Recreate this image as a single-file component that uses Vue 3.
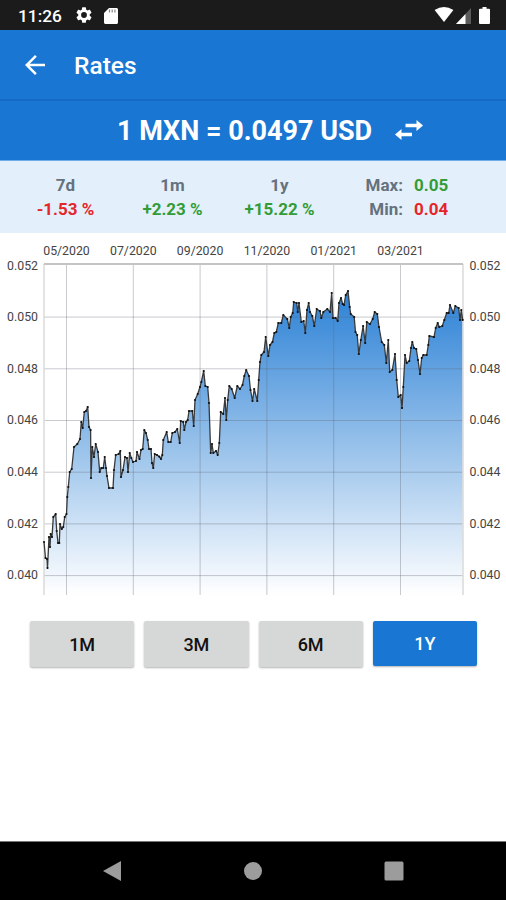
<template>
  <div class="screen">
    <header class="status-bar">
      <span class="clock">11:26</span>
      <svg class="gear" viewBox="2 2 20 20">
        <path
          fill="#fff"
          d="M19.14 12.94c.04-.3.06-.61.06-.94 0-.32-.02-.64-.07-.94l2.03-1.58a.49.49 0 0 0 .12-.61l-1.92-3.32a.49.49 0 0 0-.59-.22l-2.39.96a7 7 0 0 0-1.62-.94l-.36-2.54a.48.48 0 0 0-.48-.41h-3.84a.47.47 0 0 0-.47.41l-.36 2.54c-.59.24-1.13.57-1.62.94l-2.39-.96a.48.48 0 0 0-.59.22L2.74 8.87a.48.48 0 0 0 .12.61l2.03 1.58c-.05.3-.09.63-.09.94s.02.64.07.94l-2.03 1.58a.49.49 0 0 0-.12.61l1.92 3.32c.12.22.37.29.59.22l2.39-.96c.5.38 1.03.7 1.62.94l.36 2.54c.05.24.24.41.48.41h3.84c.24 0 .44-.17.47-.41l.36-2.54a6.8 6.8 0 0 0 1.62-.94l2.39.96c.22.08.47 0 .59-.22l1.92-3.32a.47.47 0 0 0-.12-.61zM12 15.6a3.6 3.6 0 1 1 0-7.2 3.6 3.6 0 0 1 0 7.2z"
        />
      </svg>
      <svg class="sd" viewBox="0 0 14 16">
        <path fill="#fff" d="M5 0h7.400A1.500 1.500 0 0 1 14 1.500v13a1.500 1.500 0 0 1-1.600 1.500H1.600A1.500 1.500 0 0 1 0 14.500V5z" />
        <path stroke="#888" stroke-width="1.2" d="M5.500 1.500v3M8.200 1.500v3M10.900 1.500v3" />
      </svg>
      <span class="spacer"></span>
      <svg class="wifi" viewBox="0 0 20 16">
        <path fill="#fff" d="M0 3.300Q10-3.300 20 3.300L10 16z" />
      </svg>
      <svg class="signal" viewBox="0 0 15 16">
        <path fill="#5b5b5b" d="M15 0v16H0z" />
        <path fill="#fff" d="M9.500 6v10H0z" />
      </svg>
      <svg class="battery" viewBox="0 0 11 17">
        <path fill="#fff" d="M3.500 0h4v1.700H10a1 1 0 0 1 1 1V16a1 1 0 0 1-1 1H1a1 1 0 0 1-1-1V2.700a1 1 0 0 1 1-1h2.500z" />
      </svg>
    </header>

    <nav class="toolbar">
      <svg class="back" viewBox="4 4 16 16">
        <path fill="#fff" d="M20 11H7.830l5.590-5.590L12 4l-8 8 8 8 1.410-1.410L7.830 13H20z" />
      </svg>
      <h1>Rates</h1>
    </nav>

    <section class="pair">
      <span class="rate">1 MXN = 0.0497 USD</span>
      <svg class="swap" viewBox="0 0 28 21">
        <path fill="#fff" d="M21.500 0 28 5.500 21.500 11V7.200H10.500V3.800h11zM6.500 9v3.800h10.500v3.400H6.500V20L0 14.500z" />
      </svg>
    </section>

    <section class="stats">
      <div v-for="item in changes" :key="item.label" class="change">
        <span>{{ item.label }}</span>
        <span :class="item.value.startsWith('-') ? 'down' : 'up'">{{ item.value }}</span>
      </div>
      <div class="range">
        <span>Max:</span>
        <span class="up">0.05</span>
        <span>Min:</span>
        <span class="down">0.04</span>
      </div>
    </section>

    <svg class="chart" viewBox="0 233 506 372">
      <defs>
        <linearGradient id="area" gradientUnits="userSpaceOnUse" x1="0" y1="264" x2="0" y2="595">
          <stop offset="0" stop-color="#1976d2" />
          <stop offset="1" stop-color="#ffffff" />
        </linearGradient>
      </defs>
      <path :d="areaPath" fill="url(#area)" />
      <g class="grid">
        <line v-for="m in months" :key="m.label" :x1="m.x" :x2="m.x" y1="264" y2="595" />
        <line v-for="t in ticks" :key="t.label" x1="44" x2="463" :y1="t.y" :y2="t.y" />
      </g>
      <path class="frame" d="M44 595V264M463 264V595" />
      <path class="frame top" d="M44 264H463" />
      <path :d="linePath" class="line" />
      <circle v-for="(p, i) in points" :key="i" :cx="p[0]" :cy="p[1]" r="1.1" fill="#111" />
      <g class="labels">
        <text v-for="m in months" :key="m.label" :x="m.x" y="255" text-anchor="middle">{{ m.label }}</text>
        <template v-for="t in ticks" :key="t.label">
          <text x="38" :y="t.text" text-anchor="end">{{ t.label }}</text>
          <text x="469.5" :y="t.text">{{ t.label }}</text>
        </template>
      </g>
    </svg>

    <div class="periods">
      <button
        v-for="p in periods"
        :key="p"
        :class="{ active: p === selected }"
        @click="selected = p"
      >
        {{ p }}
      </button>
    </div>

    <footer class="nav-bar">
      <svg viewBox="0 0 20 22"><path fill="#9c9c9c" d="M19 1v20L1 11z" /></svg>
      <svg viewBox="0 0 20 22"><circle cx="10" cy="11" r="9" fill="#9c9c9c" /></svg>
      <svg viewBox="0 0 20 22"><rect x="0.500" y="1.500" width="19" height="19" rx="1.500" fill="#9c9c9c" /></svg>
    </footer>
  </div>
</template>

<script setup>
import { ref, computed } from 'vue'

const changes = [
  { label: '7d', value: '-1.53 %' },
  { label: '1m', value: '+2.23 %' },
  { label: '1y', value: '+15.22 %' },
]

const periods = ['1M', '3M', '6M', '1Y']
const selected = ref('1Y')

const months = ['05/2020', '07/2020', '09/2020', '11/2020', '01/2021', '03/2021'].map(
  (label, i) => ({ label, x: 66.5 + i * 66.8 }),
)

const ticks = ['0.052', '0.050', '0.048', '0.046', '0.044', '0.042', '0.040'].map((label, i) => ({
  label,
  y: i === 0 ? 264 : 265.4 + i * 51.7,
  text: 269.5 + i * 51.6,
}))

const series = `
44,542 45.5,558 47,559 47.5,568 49,537 50,547 50.7,534 52,537 53.3,517 55.7,514 56.7,531
58,543 59.3,543 60,524 61.7,529 63.3,527 64.7,517 66.5,514 67.3,497 68.3,487 69.7,472 71.7,469
74,447 77.3,444 80,439 81.3,422 82.7,428 84.3,412 86,411 87.7,407 89,427 90.6,430 91,478
92.3,447 94,457 95.7,444 98,452 99.7,472 101.3,468 103.3,468 104.7,457 106,468 107,476
109,488 113,488 114,470 115.7,455 118.7,454 120.3,451 121,477 123,470 125,457 127,458
128,472 129.7,453 131.3,458 133,462 136,461 137,452 139.5,459 141,450 142.7,449 144.3,430
146,433 147.7,440 149,449 151,449 152,463 153.3,468 154.7,454 157,455 159.3,456.7 161,459
162.3,455 163.3,440 166.7,432 168.3,442 170.7,442 172.3,433 175,432 177.3,429 179.7,443
180.7,421 183.3,422 184.3,430 186,422 187.7,420 189,411 192.3,411 193.7,426 195,400 197.7,394
200,387 201.3,382 203.7,371 205.3,386 207.7,387 209,403 210.7,453 212,444 213.3,453 216,451
217.7,455 219.3,443 220.7,412 223.3,414 225,398 226.3,420 227.7,400 229.3,386 231.7,389
234.7,398 237.3,386 240,389 242.5,385 244.3,376 246.2,370 249,376 250.5,390 252.5,401 254.2,389
257.3,401 258.7,380 260,362 261.3,355 264,352 265.7,337 268.3,356 270,345 272.5,342 274.3,333
276.3,332 278.3,323 281.3,323 283.3,315 287.3,319 289.3,328 290.7,317 292.7,313 293.7,302
296.7,303 297.7,312 299,303 301.3,322 303.7,321 305.3,333 307,310 308.7,303 310,312 312.3,316
314.3,326 316.7,309 320,311 321.3,318 323.3,312 327.3,309 330,312 331.7,293 333,318 335.7,318
337.7,321 339,303 341,298 342.7,304 344,305 345.7,295 348,291 349.7,307 350.7,314 354.2,317
355.5,332 357.2,335 358.8,354 360.8,340 363.1,326 365.2,343 366.8,322 370,324 372.7,319
374.7,312 377.3,314 379,327 381.7,342 384.3,345 386.3,363 388.3,340 389.7,372 392.3,370
395,354 396.7,380 398.3,397 400.7,395 402,408 403.3,387 405,355 406.7,363 409.3,361 411,348
412.3,342 414,348 416.3,349 418,360 420,374 421.7,358 423.3,355 426.7,355 428.3,345 429.3,336
434,337 435.7,328 437.7,323 439.3,327 442.3,326 444.3,320 446.7,313 448.7,313 450,305 453.3,313
455.3,306 458.7,308 460,320 461.3,310 462.7,320`

const points = series
  .trim()
  .split(/\s+/)
  .map((pair) => pair.split(',').map(Number))

const linePath = computed(() => 'M' + points.map((p) => p.join(' ')).join('L'))
const areaPath = computed(() => `${linePath.value}V595H44Z`)
</script>

<style>
body {
  margin: 0;
}
</style>

<style scoped>
.screen {
  display: flex;
  flex-direction: column;
  width: 506px;
  height: 900px;
  background: #fff;
  font-family: Roboto, 'Liberation Sans', sans-serif;
}

.status-bar {
  display: flex;
  align-items: center;
  height: 30px;
  box-sizing: border-box;
  padding: 2px 16px 0 18px;
  background: #1b1b1b;
  color: #fff;
}
.clock {
  width: 44px;
  font-size: 17.3px;
  font-weight: 500;
}
.gear {
  width: 16px;
  height: 16px;
  margin: -2px 0 0 14px;
}
.sd {
  width: 14px;
  height: 16px;
  margin: -1px 0 0 12px;
}
.spacer {
  flex: 1;
}
.wifi {
  width: 20px;
  height: 15px;
  margin-top: -3px;
}
.signal {
  width: 15px;
  height: 16px;
  margin: -1px 0 0 2px;
}
.battery {
  width: 11px;
  height: 17px;
  margin: -2px 0 0 8px;
}

.toolbar {
  display: flex;
  align-items: center;
  height: 71px;
  box-sizing: border-box;
  padding-left: 25px;
  border-bottom: 2px solid #176bc5;
  background: #1976d2;
}
.back {
  width: 20px;
  height: 20px;
}
.toolbar h1 {
  margin: 2px 0 0 29px;
  color: #fff;
  font-size: 24.5px;
  font-weight: 500;
}

.pair {
  display: flex;
  align-items: center;
  height: 60px;
  box-sizing: border-box;
  padding-left: 117px;
  border-bottom: 1px solid #70aeeb;
  background: #1976d2;
}
.rate {
  width: 278px;
  color: #fff;
  font-size: 27px;
  font-weight: 700;
  white-space: nowrap;
}
.swap {
  width: 28px;
  height: 21px;
  margin-top: -1px;
}

.stats {
  display: flex;
  height: 72px;
  box-sizing: border-box;
  padding: 12px 0 0 12px;
  background: #e3f0fb;
  color: #65727d;
  font-size: 17px;
  font-weight: 700;
  line-height: 24px;
}
.change {
  display: flex;
  flex-direction: column;
  align-items: center;
  width: 107px;
}
.range {
  display: grid;
  grid-template-columns: 70px auto;
  grid-auto-rows: 24px;
  align-content: start;
  column-gap: 11px;
}
.range span:nth-child(odd) {
  text-align: right;
}
.up {
  color: #339c37;
}
.down {
  color: #e52629;
}

.chart {
  display: block;
  width: 506px;
  height: 372px;
}
.grid line {
  stroke: #606873;
  stroke-opacity: 0.35;
  stroke-width: 1;
}
.frame {
  fill: none;
  stroke: #dadada;
  stroke-width: 1.5;
}
.frame.top {
  stroke: #c4c4c4;
  stroke-width: 2;
}
.line {
  fill: none;
  stroke: #37393b;
  stroke-width: 1.3;
  stroke-linejoin: round;
}
.labels text {
  fill: #444;
  font-size: 12.3px;
}

.periods {
  display: flex;
  gap: 10px;
  padding: 16px 29px 0 30px;
}
.periods button {
  flex: 1;
  height: 46px;
  padding: 0;
  border: 0;
  border-radius: 2px;
  background: #d6d7d7;
  box-shadow: 0 1px 2px rgba(0, 0, 0, 0.3);
  color: #111;
  font-family: inherit;
  font-size: 18px;
  font-weight: 500;
}
.periods button.active {
  height: 45px;
  background: #1976d2;
  color: #fff;
}

.nav-bar {
  display: flex;
  align-items: center;
  justify-content: space-between;
  height: 59px;
  box-sizing: border-box;
  margin-top: auto;
  padding: 0 102px;
  border-top: 1px solid #777;
  background: #000;
}
.nav-bar svg {
  width: 20px;
  height: 22px;
}
</style>
